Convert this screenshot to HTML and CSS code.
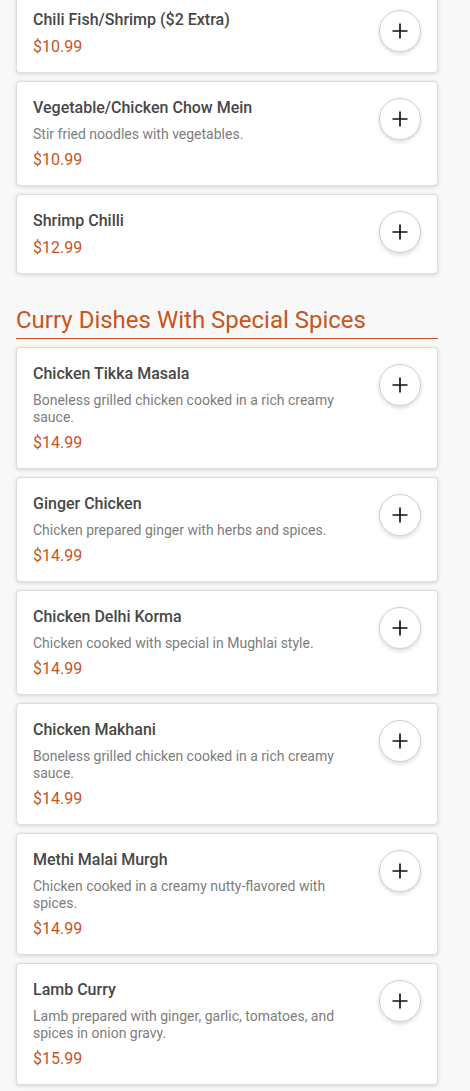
FILE: index.html
```html
<!DOCTYPE html>
<html lang="en">
  <head>
    <meta charset="UTF-8" />
    <meta name="viewport" content="width=device-width, initial-scale=1.0" />
    <title>Menu</title>
    <link rel="stylesheet" href="styles.css">
  </head>
  <body>
    <div class="menu">
      <div class="menu-item first">
        <div class="item-info">
          <h3 class="item-name">Chili Fish/Shrimp ($2 Extra)</h3>
          <div class="item-price">$10.99</div>
        </div>
        <button class="add-btn" aria-label="Add">
          <svg viewBox="0 0 24 24" width="20" height="20"><path d="M12 3v18M3 12h18" stroke="#111" stroke-width="2" fill="none"/></svg>
        </button>
      </div>

      <div class="menu-item">
        <div class="item-info">
          <h3 class="item-name">Vegetable/Chicken Chow Mein</h3>
          <p class="item-desc">Stir fried noodles with vegetables.</p>
          <div class="item-price">$10.99</div>
        </div>
        <button class="add-btn" aria-label="Add">
          <svg viewBox="0 0 24 24" width="20" height="20"><path d="M12 3v18M3 12h18" stroke="#111" stroke-width="2" fill="none"/></svg>
        </button>
      </div>

      <div class="menu-item">
        <div class="item-info">
          <h3 class="item-name">Shrimp Chilli</h3>
          <div class="item-price">$12.99</div>
        </div>
        <button class="add-btn" aria-label="Add">
          <svg viewBox="0 0 24 24" width="20" height="20"><path d="M12 3v18M3 12h18" stroke="#111" stroke-width="2" fill="none"/></svg>
        </button>
      </div>

      <h2 class="category">Curry Dishes With Special Spices</h2>

      <div class="menu-item">
        <div class="item-info">
          <h3 class="item-name">Chicken Tikka Masala</h3>
          <p class="item-desc">Boneless grilled chicken cooked in a rich creamy sauce.</p>
          <div class="item-price">$14.99</div>
        </div>
        <button class="add-btn" aria-label="Add">
          <svg viewBox="0 0 24 24" width="20" height="20"><path d="M12 3v18M3 12h18" stroke="#111" stroke-width="2" fill="none"/></svg>
        </button>
      </div>

      <div class="menu-item">
        <div class="item-info">
          <h3 class="item-name">Ginger Chicken</h3>
          <p class="item-desc">Chicken prepared ginger with herbs and spices.</p>
          <div class="item-price">$14.99</div>
        </div>
        <button class="add-btn" aria-label="Add">
          <svg viewBox="0 0 24 24" width="20" height="20"><path d="M12 3v18M3 12h18" stroke="#111" stroke-width="2" fill="none"/></svg>
        </button>
      </div>

      <div class="menu-item">
        <div class="item-info">
          <h3 class="item-name">Chicken Delhi Korma</h3>
          <p class="item-desc">Chicken cooked with special in Mughlai style.</p>
          <div class="item-price">$14.99</div>
        </div>
        <button class="add-btn" aria-label="Add">
          <svg viewBox="0 0 24 24" width="20" height="20"><path d="M12 3v18M3 12h18" stroke="#111" stroke-width="2" fill="none"/></svg>
        </button>
      </div>

      <div class="menu-item">
        <div class="item-info">
          <h3 class="item-name">Chicken Makhani</h3>
          <p class="item-desc">Boneless grilled chicken cooked in a rich creamy sauce.</p>
          <div class="item-price">$14.99</div>
        </div>
        <button class="add-btn" aria-label="Add">
          <svg viewBox="0 0 24 24" width="20" height="20"><path d="M12 3v18M3 12h18" stroke="#111" stroke-width="2" fill="none"/></svg>
        </button>
      </div>

      <div class="menu-item">
        <div class="item-info">
          <h3 class="item-name">Methi Malai Murgh</h3>
          <p class="item-desc">Chicken cooked in a creamy nutty-flavored with spices.</p>
          <div class="item-price">$14.99</div>
        </div>
        <button class="add-btn" aria-label="Add">
          <svg viewBox="0 0 24 24" width="20" height="20"><path d="M12 3v18M3 12h18" stroke="#111" stroke-width="2" fill="none"/></svg>
        </button>
      </div>

      <div class="menu-item">
        <div class="item-info">
          <h3 class="item-name">Lamb Curry</h3>
          <p class="item-desc">Lamb prepared with ginger, garlic, tomatoes, and spices in onion gravy.</p>
          <div class="item-price">$15.99</div>
        </div>
        <button class="add-btn" aria-label="Add">
          <svg viewBox="0 0 24 24" width="20" height="20"><path d="M12 3v18M3 12h18" stroke="#111" stroke-width="2" fill="none"/></svg>
        </button>
      </div>
    </div>
  </body>
</html>
```

FILE: styles.css
```css
body {
  margin: 0;
  font-family: Roboto, "Liberation Sans", Arial, sans-serif;
  background-color: #f8f8f8;
}
.menu {
  padding: 0 32px 0 16px;
}
.menu-item {
  display: flex;
  gap: 16px;
  align-items: flex-start;
  background: #fff;
  border: 1px solid #dcdcdc;
  border-radius: 4px;
  box-shadow: 0 1px 4px rgba(0, 0, 0, 0.14);
  padding: 15px 16px;
  margin-bottom: 8px;
}
.menu-item.first {
  margin-top: -6px;
  border-top: none;
  border-top-left-radius: 0;
  border-top-right-radius: 0;
}
.item-info {
  flex: 1;
  min-width: 0;
}
.item-name {
  margin: 0 0 6px;
  font-size: 16px;
  font-weight: 500;
  line-height: 21px;
  color: #474747;
}
.item-desc {
  margin: 8px 0 6px;
  font-size: 14px;
  line-height: 17px;
  color: #7d7d7d;
}
.item-price {
  font-size: 16px;
  line-height: 21px;
  color: #c9541c;
}
.add-btn {
  flex: none;
  width: 42px;
  height: 42px;
  margin-top: 1px;
  border-radius: 50%;
  border: 1px solid #d0d0d0;
  background: #fff;
  box-shadow: 0 2px 4px rgba(0, 0, 0, 0.14);
  display: flex;
  align-items: center;
  justify-content: center;
  padding: 0;
  cursor: pointer;
}
.category {
  margin: 32px 0 8px;
  padding-bottom: 4px;
  border-bottom: 1px solid #c9541c;
  font-size: 24px;
  font-weight: 400;
  line-height: 28px;
  color: #c9541c;
}
```
